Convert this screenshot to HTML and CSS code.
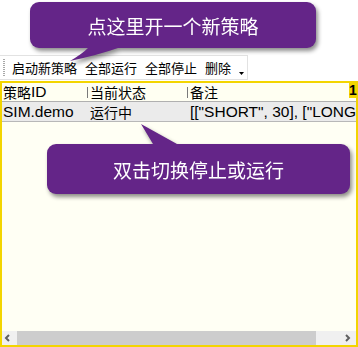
FILE: index.html
```html
<!DOCTYPE html>
<html>
<head>
<meta charset="utf-8">
<link rel="stylesheet" href="styles.css">
</head>
<body>
<div class="page">
  <div class="hint hint-top">点这里开一个新策略<svg class="tail tail-top" width="54" height="20" viewBox="0 0 54 20"><path d="M20,0 L52,0 L50,4 Q30,11 2,17 Q14,10 20,4 Z"/></svg></div>
  <div class="toolbar">
    <span class="grip"></span>
    <span class="tb-item first">启动新策略</span>
    <span class="tb-item">全部运行</span>
    <span class="tb-item">全部停止</span>
    <span class="tb-item">删除</span>
    <svg class="more" width="5" height="3" viewBox="0 0 5 3"><path d="M0,0 L5,0 L2.5,3 Z"/></svg>
  </div>
  <div class="grid">
    <div class="grid-head">
      <div class="cell c1">策略<span class="lat">ID</span></div>
      <div class="cell c2 sep">当前状态</div>
      <div class="cell c3 sep">备注</div>
      <span class="badge">1</span>
    </div>
    <div class="grid-row">
      <div class="cell c1 lat">SIM.demo</div>
      <div class="cell c2">运行中</div>
      <div class="cell c3 lat">[["SHORT", 30], ["LONG", 30]]</div>
    </div>
    <div class="grid-fill"></div>
    <div class="hscroll">
      <div class="sb-btn"><svg width="15" height="14" viewBox="0 0 15 14"><polyline points="7,4 4,7 7,10"/></svg></div>
      <div class="sb-thumb"></div>
      <div class="sb-track"><svg width="15" height="14" viewBox="0 0 15 14"><polyline points="5,4 8,7 5,10"/></svg></div>
    </div>
  </div>
  <div class="hint hint-bottom">双击切换停止或运行<svg class="tail tail-bottom" width="40" height="26" viewBox="0 0 40 26"><path d="M2,2 L38,22 L38,26 L14,26 L14,22 Z"/></svg></div>
</div>
</body>
</html>
```
FILE: styles.css
```css
html, body {
  margin: 0;
  padding: 0;
  background: #ffffff;
}
body {
  width: 358px;
  height: 347px;
  overflow: hidden;
  font-family: "Liberation Sans", "Noto Sans CJK SC", sans-serif;
  color: #000;
}
.page {
  position: relative;
  width: 358px;
  height: 347px;
}
.hint {
  background: #642588;
  color: #ffffff;
  font-family: "Noto Sans CJK SC", sans-serif;
  font-size: 19px;
  line-height: 1;
  border-radius: 9px;
  display: flex;
  align-items: center;
  justify-content: center;
  filter: drop-shadow(2px 3px 2px rgba(0,0,0,0.45));
  z-index: 5;
}
.hint svg path { fill: #642588; }
.tail { position: absolute; overflow: visible; }
.hint-top {
  position: relative;
  margin: 2px 0 0 30px;
  width: 286px;
  height: 46px;
  padding-top: 1px;
  box-sizing: border-box;
}
.tail-top { left: 38px; top: 42px; }
.hint-bottom {
  position: absolute;
  left: 47px;
  top: 142px;
  width: 303px;
  height: 50px;
  padding-top: 1px;
  box-sizing: border-box;
}
.tail-bottom { left: 92px; top: -22px; }

.toolbar {
  margin-top: 7px;
  width: 248px;
  height: 25px;
  box-sizing: border-box;
  border: 1px solid #e2e2e2;
  border-left: none;
  background: #ffffff;
  display: flex;
  align-items: center;
  font-family: "Noto Sans CJK SC", sans-serif;
  font-size: 13px;
  line-height: 1;
}
.grip {
  width: 2px;
  height: 18px;
  margin-left: 3px;
  background: repeating-linear-gradient(#a8a8a8 0 1px, transparent 1px 2px);
}
.tb-item { margin-left: 8px; white-space: nowrap; }
.tb-item.first { margin-left: 7px; }
.more {
  margin-left: 8px;
  align-self: flex-end;
  margin-bottom: 4px;
}
.more path { fill: #000; }

.grid {
  margin-top: 1px;
  width: 358px;
  height: 266px;
  box-sizing: border-box;
  border: 2px solid #f3d500;
  background: #fffff4;
  display: flex;
  flex-direction: column;
  font-family: "Noto Sans CJK SC", sans-serif;
  font-size: 14px;
  line-height: 1;
}
.lat { font-family: "Liberation Sans", sans-serif; font-size: 15.5px; }
.grid-head {
  position: relative;
  height: 18px;
  display: flex;
  border-bottom: 1px solid #b0b0b0;
  background: #fffff2;
}
.grid-row {
  height: 19px;
  display: flex;
  background: #ebebeb;
  border-bottom: 1px solid #b8b8b8;
}
.cell {
  display: flex;
  align-items: center;
  white-space: nowrap;
  overflow: hidden;
  position: relative;
  box-sizing: border-box;
}
.c1 { width: 85px; padding-left: 1px; }
.c2 { width: 100px; padding-left: 3px; }
.c3 { flex: 1; padding-left: 3px; min-width: 0; }
.sep::before {
  content: "";
  position: absolute;
  left: 0;
  top: 4px;
  width: 1px;
  height: 11px;
  background: #7a7a7a;
}
.badge {
  position: absolute;
  right: 0;
  top: 0;
  width: 7px;
  height: 15px;
  background: #f3d500;
  font-family: "Liberation Sans", sans-serif;
  font-weight: bold;
  font-size: 14px;
  line-height: 15px;
  text-align: center;
}
.grid-fill { flex: 1; }
.hscroll {
  height: 14px;
  display: flex;
}
.hscroll svg polyline {
  fill: none;
  stroke: #606060;
  stroke-width: 2;
}
.sb-btn { width: 15px; background: #f0f0f0; }
.sb-thumb { width: 299px; background: #cdcdcd; }
.sb-track {
  flex: 1;
  background: #f0f0f0;
  display: flex;
  justify-content: flex-end;
}
```
